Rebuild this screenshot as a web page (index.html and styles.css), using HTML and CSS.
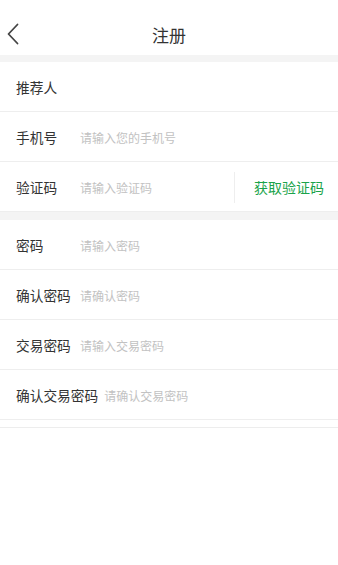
FILE: index.html
```html
<!DOCTYPE html>
<html lang="zh">
<head>
<meta charset="utf-8">
<link rel="stylesheet" href="styles.css">
</head>
<body>
<header class="nav">
  <svg class="back" width="14" height="22" viewBox="0 0 14 22"><path d="M11.5 1.5 L2.5 11 L11.5 20.5" fill="none" stroke="#444" stroke-width="1.8" stroke-linecap="round" stroke-linejoin="round"/></svg>
  <span class="title">注册</span>
</header>
<section class="group">
  <div class="row"><span class="label">推荐人</span><span class="ph"></span></div>
  <div class="row"><span class="label">手机号</span><span class="ph">请输入您的手机号</span></div>
  <div class="row"><span class="label">验证码</span><span class="ph">请输入验证码</span><span class="code">获取验证码</span></div>
</section>
<section class="group">
  <div class="row"><span class="label">密码</span><span class="ph">请输入密码</span></div>
  <div class="row"><span class="label">确认密码</span><span class="ph">请确认密码</span></div>
  <div class="row"><span class="label">交易密码</span><span class="ph">请输入交易密码</span></div>
  <div class="row"><span class="label">确认交易密码</span><span class="ph">请确认交易密码</span></div>
</section>
<div class="tail"></div>
</body>
</html>
```
FILE: styles.css
```css
html, body { margin: 0; padding: 0; background: #fff; }
body {
  font-family: "Noto Sans CJK SC", "Noto Sans", sans-serif;
  color: #333;
  width: 338px;
}
.nav {
  height: 55px;
  display: flex;
  align-items: center;
  justify-content: center;
  position: relative;
}
.back { position: absolute; left: 6px; top: 23px; }
.title { font-size: 17px; color: #333; margin-top: 14px; }
.group {
  border-top: 7px solid #f4f4f4;
}
.group + .group { border-top-width: 8px; }
.row {
  height: 49px;
  border-bottom: 1px solid #eeeeee;
  display: flex;
  align-items: center;
  padding-left: 16px;
  padding-top: 1px;
  box-sizing: content-box;
}
.row { height: 48px; }
.label {
  font-size: 13.7px;
  color: #333;
  min-width: 58px;
  margin-right: 6px;
  white-space: nowrap;
}
.ph {
  font-size: 12px;
  color: #c2c2c2;
  flex: 1;
  white-space: nowrap;
}
.code {
  font-size: 14px;
  color: #1aa34a;
  border-left: 1px solid #eeeeee;
  height: 31px;
  line-height: 31px;
  padding-left: 19px;
  padding-right: 14px;
}
.tail {
  margin-top: 7px;
  border-top: 1px solid #ededed;
}
```
